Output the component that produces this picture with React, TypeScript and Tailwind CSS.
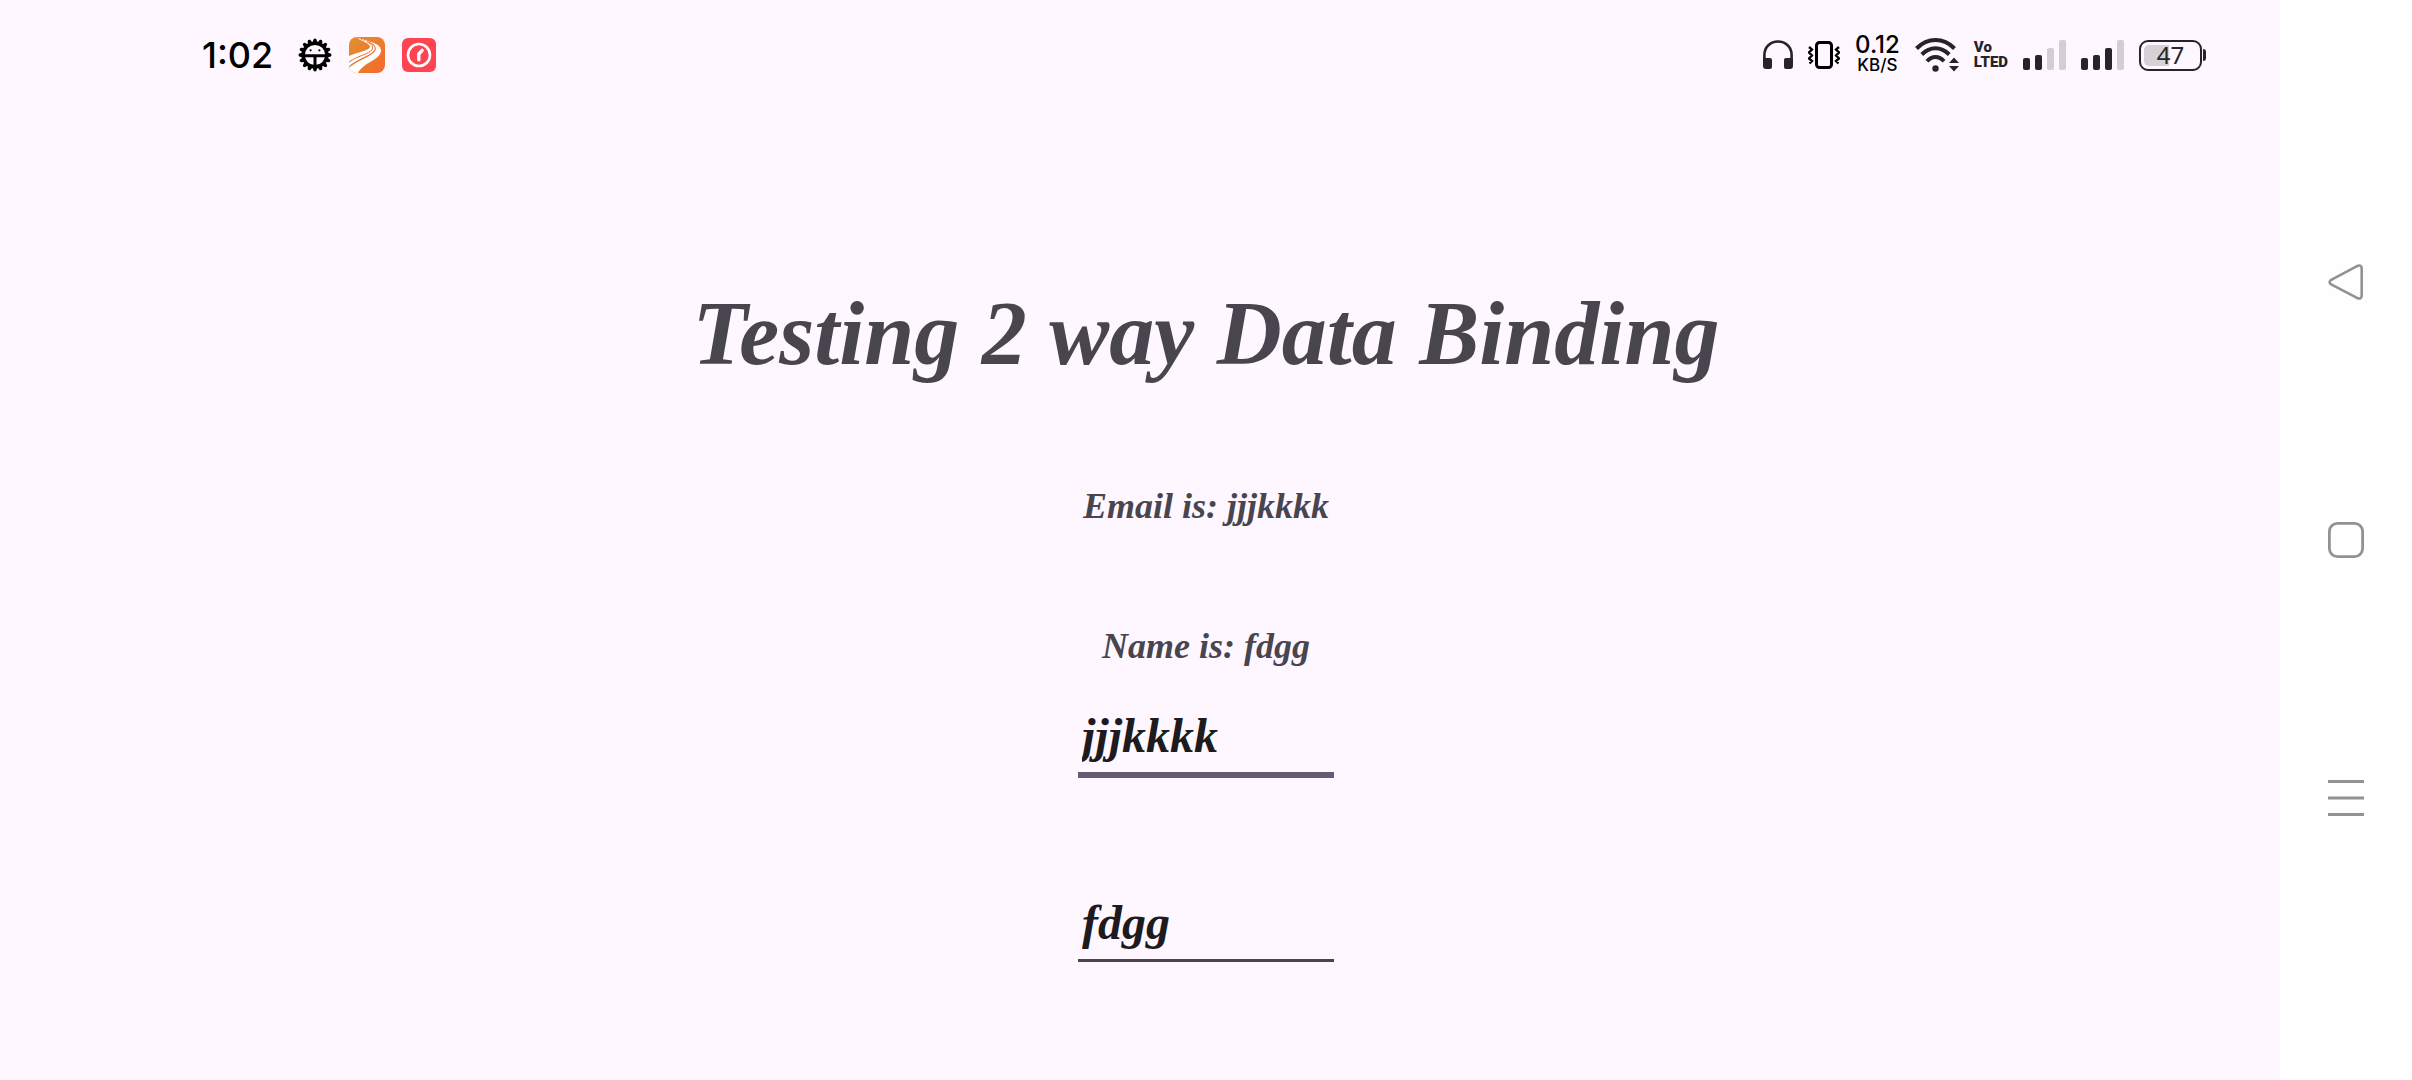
import { useState } from "react";

function GearIcon() {
  const teeth = Array.from({ length: 16 }, (_, i) => i * 22.5);
  return (
    <svg className="size-[34px]" viewBox="0 0 34 34" aria-hidden="true">
      {teeth.map((angle) => (
        <path key={angle} d="M14.4 5 L15.6 1.2 Q17 -.2 18.4 1.2 L19.6 5Z" fill="#000" transform={`rotate(${angle} 17 17)`} />
      ))}
      <circle cx="17" cy="17" r="11.8" fill="none" stroke="#000" strokeWidth="3.4" />
      <path d="M5 17.7H29M17 18V29" stroke="#000" strokeWidth="3" />
      <circle cx="12.6" cy="12.3" r="1.1" />
      <circle cx="21.4" cy="12.3" r="1.1" />
    </svg>
  );
}

function RoadIcon() {
  return (
    <svg className="size-9" viewBox="0 0 36 36" aria-hidden="true">
      <defs>
        <linearGradient id="road-bg" x1="0" y1="0" x2="1" y2="1">
          <stop offset="0" stopColor="#e2902f" />
          <stop offset="1" stopColor="#f4692c" />
        </linearGradient>
        <clipPath id="road-clip">
          <rect width="36" height="36" rx="8" />
        </clipPath>
      </defs>
      <g clipPath="url(#road-clip)">
        <rect width="36" height="36" fill="url(#road-bg)" />
        <path d="M7 0C14 4 33 5 32 14C31 23 15 25 9 36H0V19C8 15 20 14 21 10C21 6 11 4 7 0Z" fill="#fff" />
        <path d="M19 5C25 7 27 9 26 13C24 19 8 22 0 30" fill="none" stroke="#e5702f" strokeWidth="1.2" />
        <path d="M20 6C24 8 24 10 23 13C20 17 8 19 0 25" fill="none" stroke="#e5702f" strokeWidth="1" />
        <path d="M8 2l3-2M11 4l3-3M14 5l2-3M17 7l2-3" stroke="#ea8a3d" strokeWidth="1" />
      </g>
    </svg>
  );
}

function ClockIcon() {
  return (
    <svg className="size-[34px]" viewBox="0 0 34 34" aria-hidden="true">
      <rect width="34" height="34" rx="6" fill="#fd4450" />
      <circle cx="17" cy="17" r="11" fill="none" stroke="#fff" strokeWidth="2.6" />
      <path d="M20.2 12.4L16.8 16V21.8" fill="none" stroke="#fff" strokeWidth="3.4" strokeLinecap="round" strokeLinejoin="round" />
    </svg>
  );
}

function HeadphonesIcon() {
  return (
    <svg className="h-[30px] w-[30px]" viewBox="0 0 30 30" aria-hidden="true">
      <path d="M1.4 20V15C1.4 7 7.5 1.5 15 1.5S28.6 7 28.6 15V20" fill="none" stroke="#262428" strokeWidth="2.6" />
      <path d="M0 18H7Q9 18 9 20V27Q9 29 7 29H3Q0 29 0 26ZM30 18H23Q21 18 21 20V27Q21 29 23 29H27Q30 29 30 26Z" fill="#262428" />
    </svg>
  );
}

function VibrateIcon() {
  return (
    <svg className="h-7 w-8" viewBox="0 0 32 28" aria-hidden="true">
      <rect x="8.5" y="1.5" width="15" height="25" rx="3" fill="none" stroke="#000" strokeWidth="3" />
      <path d="M1 6L4 8.5L1 11.5L4 14.5L1 17.5L4 20L1.5 22.5M31 6L28 8.5L31 11.5L28 14.5L31 17.5L28 20L30.5 22.5" fill="none" stroke="#000" strokeWidth="2.3" />
    </svg>
  );
}

function WifiIcon() {
  return (
    <svg className="h-[34px] w-11" viewBox="0 0 44 34" aria-hidden="true">
      <g fill="none" stroke="#262428" strokeWidth="4">
        <path d="M1.5 10.5C12.5-.8 28.5-.8 39.5 10.5" />
        <path d="M6.8 16.5C15 8.3 26 8.3 34.2 16.5" />
        <path d="M12 23.3C17 17.5 24 17.5 29 23.3" />
      </g>
      <circle cx="20.5" cy="30.5" r="3.2" fill="#262428" />
      <path d="M34 25L39 19.5L44 25ZM34 28L39 33.5L44 28Z" fill="#262428" />
    </svg>
  );
}

function Signal({ level }: { level: number }) {
  return (
    <div className="flex h-[30px] items-end gap-[5px]" role="img" aria-label={`Signal ${level} of 4`}>
      <span className="h-3 w-[7px] rounded-xs bg-[#262428]" />
      <span className="h-[15px] w-[7px] rounded-xs bg-[#262428]" />
      <span className={`h-[22px] w-[7px] rounded-xs ${level > 2 ? "bg-[#262428]" : "bg-[#d3cdd4]"}`} />
      <span className="h-[30px] w-[7px] rounded-xs bg-[#d3cdd4]" />
    </div>
  );
}

function Battery({ percent }: { percent: number }) {
  return (
    <div className="flex items-center gap-px">
      <div className="relative flex h-[31px] w-[63px] items-center justify-center rounded-[9px] border-2 border-[#262428]">
        <div className="absolute inset-[3px]">
          <div className="h-full rounded-l-[5px] bg-[#d6d0d7]" style={{ width: `${percent}%` }} />
        </div>
        <span className="relative font-['Noto_Sans',sans-serif] text-[24px] leading-6 text-[#262428]">{percent}</span>
      </div>
      <span className="h-3 w-[3px] rounded-r-sm bg-[#262428]" />
    </div>
  );
}

function StatusBar() {
  return (
    <header className="flex h-[110px] items-center justify-between pr-[74px] pl-[70px]">
      <div className="flex items-center gap-[17px]">
        <time className="mr-2 font-['Inter',sans-serif] text-[36px] leading-10 font-medium text-black">1:02</time>
        <GearIcon />
        <RoadIcon />
        <ClockIcon />
      </div>
      <div className="flex items-center gap-[15px]">
        <HeadphonesIcon />
        <VibrateIcon />
        <div className="flex flex-col items-center font-['Inter',sans-serif] font-medium text-black">
          <span className="text-[24px] leading-5">0.12</span>
          <span className="text-[17px] leading-5">KB/S</span>
        </div>
        <WifiIcon />
        <div className="flex flex-col font-['Roboto',sans-serif] text-[15px] leading-[15px] font-black text-[#262428]">
          <span>Vo</span>
          <span>LTED</span>
        </div>
        <Signal level={2} />
        <Signal level={3} />
        <Battery percent={47} />
      </div>
    </header>
  );
}

function SystemNav() {
  return (
    <nav className="flex w-[132px] shrink-0 flex-col items-center justify-center gap-[222px] bg-[#fefefe] text-[#929292]">
      <button type="button" aria-label="Back">
        <svg className="size-9" viewBox="0 0 36 36" fill="none" stroke="currentColor" strokeWidth="2.6">
          <path d="M3.2 15.8L28.5 2.3Q33.7 0 33.7 4.5V31.5Q33.7 36 28.5 33.7L3.2 20.5Q0 18.2 3.2 15.8Z" />
        </svg>
      </button>
      <button type="button" aria-label="Home">
        <svg className="size-9" viewBox="0 0 36 36" fill="none" stroke="currentColor" strokeWidth="2.8">
          <rect x="1.4" y="1.4" width="33.2" height="33.2" rx="8" />
        </svg>
      </button>
      <button type="button" aria-label="Recent apps">
        <svg className="size-9" viewBox="0 0 36 36" stroke="currentColor" strokeWidth="3">
          <path d="M0 1.5H36M0 18H36M0 34.5H36" />
        </svg>
      </button>
    </nav>
  );
}

export default function App() {
  const [email, setEmail] = useState("jjjkkkk");
  const [name, setName] = useState("fdgg");

  return (
    <div className="flex min-h-screen bg-[#fef7ff]">
      <div className="flex flex-1 flex-col pl-[132px]">
        <StatusBar />
        <main className="flex flex-col items-center pt-[170px] font-['Liberation_Serif',serif] font-bold text-[#49454f] italic">
          <h1 className="text-[90px] leading-[108px]">Testing 2 way Data Binding</h1>
          <label htmlFor="email" className="mt-[94px] text-[36px] leading-[48px]">
            Email is: {email}
          </label>
          <label htmlFor="name" className="mt-[92px] text-[36px] leading-[48px]">
            Name is: {name}
          </label>
          <input
            id="email"
            type="text"
            value={email}
            onChange={(event) => setEmail(event.target.value)}
            className="mt-[38px] w-64 border-b-6 border-[#625b71] px-1 pb-2 text-[48px] leading-[56px] text-[#1d1b20] outline-none"
          />
          <input
            id="name"
            type="text"
            value={name}
            onChange={(event) => setName(event.target.value)}
            className="mt-[117px] w-64 border-b-3 border-[#49454e] px-1 pb-2 text-[48px] leading-[56px] text-[#1d1b20] outline-none"
          />
        </main>
      </div>
      <SystemNav />
    </div>
  );
}
